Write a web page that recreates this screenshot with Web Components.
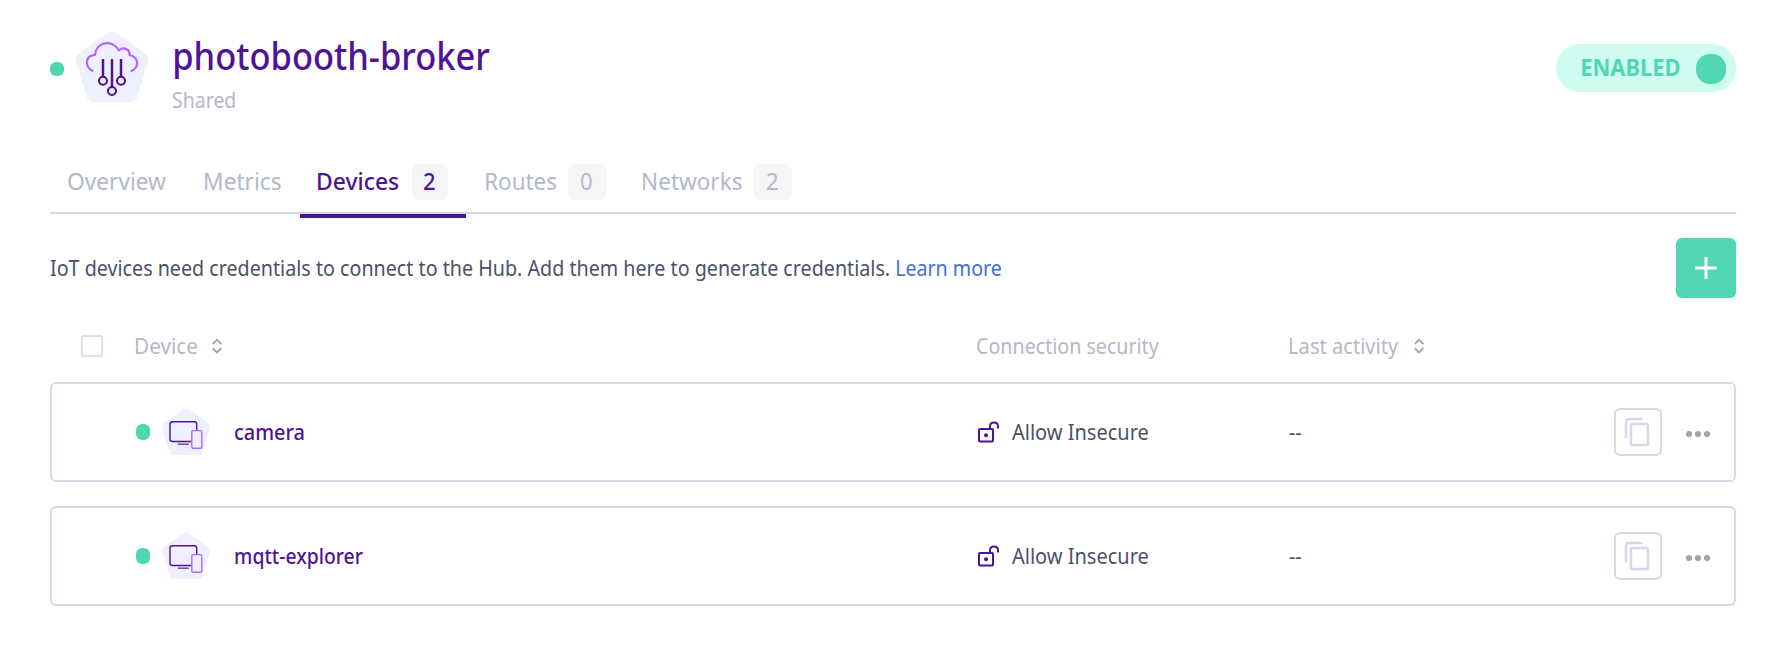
<!DOCTYPE html>
<html lang="en">
<head>
<meta charset="utf-8">
<title>photobooth-broker</title>
<style>
html,body{margin:0;background:#fff}
body{font-family:"Noto Sans","Open Sans",sans-serif;color:#4b5167;--line:#d3d9e9;--green:#50d6b5;--purple:#4f1396;--grey:#b3b8c7}
</style>
</head>
<body>
<broker-page></broker-page>
<script>
const define = (name, html, setup) => customElements.define(name, class extends HTMLElement {
  connectedCallback() {
    if (this.shadowRoot) return;
    const t = document.createElement('template');
    t.innerHTML = html;
    this.attachShadow({ mode: 'open' }).append(t.content.cloneNode(true));
    if (setup) setup(this, this.shadowRoot);
  }
});

define('fit-label', `<style>
:host{display:block;flex:none;white-space:nowrap;font-size:21px;line-height:28px}
span{display:inline-block;vertical-align:top;transform-origin:0 0}
</style><span><slot></slot></span>`, (el, root) => {
  const w = +el.getAttribute('w'), cs = getComputedStyle(el);
  const ctx = document.createElement('canvas').getContext('2d');
  ctx.font = `${cs.fontWeight} ${cs.fontSize} ${cs.fontFamily}`;
  const m = ctx.measureText(el.textContent.trim());
  const s = w / (m.actualBoundingBoxRight + m.actualBoundingBoxLeft);
  el.style.width = w + 'px';
  root.querySelector('span').style.transform = `translateX(${m.actualBoundingBoxLeft * s}px) scaleX(${s})`;
});

define('status-dot', `<style>:host{display:block;flex:none;width:14px;height:var(--h,14px);border-radius:6px;background:var(--green)}</style>`);

define('hub-icon', `<style>:host,svg{display:block;flex:none}</style>
<svg width="72" height="71" viewBox="0 0 72 71" fill="none">
<path d="M36 8 64.3 28 53.6 62H18.4L7.7 28Z" fill="#eeefff" stroke="#eeefff" stroke-width="16" stroke-linejoin="round"/>
<path d="M17.3 39.2C8.5 35.5 8.5 23.5 19 22.8C20.5 9 36.5 7.5 42.8 18.3C47 14.2 54 17 53.6 23C63.5 25.5 63.5 36 54.7 39.2" stroke="#b266ff" stroke-width="2.2" stroke-linejoin="round"/>
<path d="M27 27V45M36 27V55.5M45 27V45" stroke="#4f1396" stroke-width="2.5"/>
<g stroke="#4f1396" stroke-width="2.1"><circle cx="27" cy="48.7" r="4"/><circle cx="45" cy="48.7" r="4"/><circle cx="36" cy="59" r="4"/></g></svg>`);

define('device-icon', `<style>:host,svg{display:block;flex:none}</style>
<svg width="48" height="48" viewBox="0 0 48 48" fill="none">
<path d="M24 5.8 42.7 19 35.6 41.8H12.4L5.3 19Z" fill="#eeefff" stroke="#eeefff" stroke-width="10.6" stroke-linejoin="round"/>
<rect x="8" y="13.7" width="26.7" height="19.8" rx="2.5" stroke="#4f1396" stroke-width="1.4"/>
<path d="M15.8 36.2H26.8" stroke="#6a3ca8" stroke-width="1.4"/>
<rect x="29.8" y="22.6" width="10" height="17.6" rx="1.3" fill="#eeefff" stroke="#b266ff" stroke-width="1.4"/></svg>`);

define('sort-icon', `<style>:host,svg{display:block;flex:none}</style>
<svg width="12" height="16" viewBox="0 0 12 16" fill="none" stroke="#a5a5a5" stroke-width="1.9"><path d="M1.7 6.1 6 1.9 10.3 6.1M1.7 10.2 6 14.4 10.3 10.2"/></svg>`);

define('enabled-toggle', `<style>
:host{display:flex;box-sizing:border-box;flex:none;width:180px;height:48px;border-radius:24px;background:#cffcf0;color:var(--green);align-items:center;justify-content:space-between;padding:0 10px 0 25.5px}
fit-label{font-size:24px;line-height:32px;font-weight:700;padding-bottom:2px}
i{width:30px;height:30px;border-radius:14px;background:var(--green);margin-top:2px}
</style><fit-label w="98">ENABLED</fit-label><i></i>`);

define('page-header', `<style>
:host{display:flex;align-items:flex-start;height:134px;padding-top:30px}
status-dot{margin:32px 12px 0 0}hub-icon{margin:2px 25px 0 0}
.names{flex:1}
.title{font-size:37.5px;line-height:52px;font-weight:500;color:var(--purple);padding-left:1.5px}
.sub{color:var(--grey);margin-top:4px}
enabled-toggle{margin-top:14px}
</style><status-dot></status-dot><hub-icon></hub-icon>
<div class="names"><fit-label class="title" w="315">photobooth-broker</fit-label><fit-label class="sub" w="62.5">Shared</fit-label></div>
<enabled-toggle></enabled-toggle>`);

define('tab-item', `<style>
:host{display:flex;align-items:flex-start;box-sizing:border-box;height:54px;padding:0 18px;color:var(--grey);flex:none}
:host([active]){color:var(--purple);font-weight:500;border-bottom:4px solid var(--purple)}
fit-label{font-size:24px;line-height:34px}
.count{display:flex;justify-content:center;box-sizing:border-box;width:38px;height:36px;border-radius:6px;background:#f5f5f8;margin-left:12px}
.count fit-label{margin-left:-1px}
:host([active]) .count{width:36px;margin-left:13.5px}
</style>`, (el, root) => {
  const l = document.createElement('fit-label');
  l.setAttribute('w', el.getAttribute('w'));
  l.textContent = el.getAttribute('label');
  root.append(l);
  if (el.hasAttribute('count')) {
    const c = document.createElement('div'); c.className = 'count';
    const n = document.createElement('fit-label'); n.setAttribute('w', '11');
    n.textContent = el.getAttribute('count');
    c.append(n); root.append(c);
  }
});

define('tab-bar', `<style>
:host{display:flex;box-sizing:border-box;height:50px;border-bottom:2px solid var(--line)}
</style><slot></slot>`);

define('intro-bar', `<style>
:host{display:flex;align-items:center;height:60px;margin-top:24px}
.l{margin-left:7px;color:#4070dc}
button{margin:0 0 0 auto;padding:0;border:0;width:60px;height:60px;border-radius:6px;background:var(--green);display:grid;place-items:center}
</style><fit-label w="839.5">IoT devices need credentials to connect to the Hub. Add them here to generate credentials.</fit-label>
<fit-label class="l" w="104">Learn more</fit-label>
<button aria-label="Add"><svg width="22" height="22" viewBox="0 0 22 22" stroke="#fff" stroke-width="3"><path d="M11 .3V21.7M.3 11H21.7"/></svg></button>`);

define('list-header', `<style>
:host{display:grid;grid-template-columns:31px 55px 841px 313px 1fr;align-items:center;height:36px;margin-top:30px;color:var(--grey)}
i{grid-column:2;box-sizing:border-box;width:22px;height:22px;border:2px solid #dce0ee;border-radius:2px}
div{display:flex;align-items:center;gap:14px}
</style><i></i><div><fit-label w="61">Device</fit-label><sort-icon></sort-icon></div>
<fit-label w="182">Connection security</fit-label>
<div><fit-label w="108.5">Last activity</fit-label><sort-icon></sort-icon></div>`);

define('device-row', `<style>
:host{display:grid;box-sizing:border-box;grid-template-columns:841px 313px 100px 1fr;align-items:center;height:100px;margin-bottom:24px;padding-left:84px;border:2px solid var(--line);border-radius:6px}
div{display:flex;align-items:center}
status-dot{--h:16px;margin-right:12px}
device-icon{margin-right:24.5px;margin-top:-1px}
slot{color:var(--purple);font-weight:500;display:block}
.lock{margin-right:12px}
.dash{margin:0 0 0 -1px}
.act{justify-content:flex-end;padding-right:23px}
button{box-sizing:border-box;width:48px;height:48px;margin:0 24px 0 0;padding:0;background:#fff;border:2px solid var(--line);border-radius:6px;display:grid;place-items:center}
button svg{margin-left:-2px}
svg{display:block;flex:none}
</style>
<div><status-dot></status-dot><device-icon></device-icon><slot></slot></div>
<div><svg class="lock" width="23" height="24" viewBox="0 0 23 24" fill="none" stroke="#4f1396" stroke-width="2"><rect x="2" y="9" width="14" height="12.4" rx="1"/><path d="M13 9V6.2C13 1.2 21 1.2 21 6.2V8.6"/><circle cx="9" cy="15.3" r="2" fill="#4f1396" stroke="none"/></svg><fit-label w="136">Allow Insecure</fit-label></div>
<fit-label class="dash" w="12">--</fit-label>
<div class="act"><button aria-label="Copy"><svg width="26" height="30" viewBox="0 0 26 30" fill="none" stroke="#d3d9e9" stroke-width="2.4"><path d="M18.8 2H4Q2 2 2 4V21.5"/><rect x="7" y="7" width="17" height="21" rx="1.3"/></svg></button>
<svg width="26" height="8" viewBox="0 0 26 8" fill="#a5a5a5" style="margin:4px 0 0 -1px"><circle cx="4" cy="4" r="3.1"/><circle cx="13" cy="4" r="3.1"/><circle cx="22" cy="4" r="3.1"/></svg></div>`);

define('broker-page', `<style>
:host{display:block;box-sizing:border-box;height:648px;padding:0 52px 0 50px;overflow:hidden}
.rows{margin-top:18px}
</style>
<page-header></page-header>
<tab-bar>
<tab-item label="Overview" w="98"></tab-item><tab-item label="Metrics" w="76" style="margin-left:2.5px"></tab-item>
<tab-item label="Devices" w="80.5" count="2" active style="margin-left:1.5px"></tab-item>
<tab-item label="Routes" w="70.5" count="0" style="margin-left:1.5px"></tab-item><tab-item label="Networks" w="99" count="2" style="margin-left:1px"></tab-item>
</tab-bar>
<intro-bar></intro-bar>
<list-header></list-header>
<div class="rows"><device-row><fit-label w="69">camera</fit-label></device-row>
<device-row><fit-label w="128">mqtt-explorer</fit-label></device-row></div>`);
</script>
</body>
</html>
